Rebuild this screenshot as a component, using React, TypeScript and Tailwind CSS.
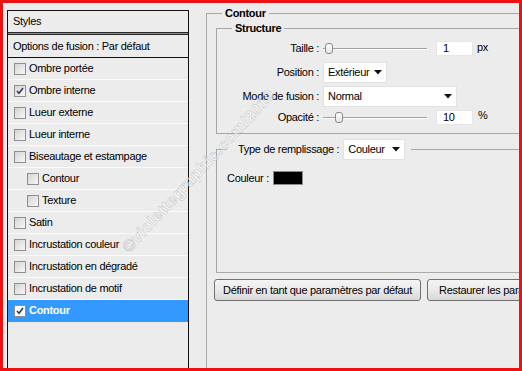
const font = "font-['Liberation_Sans',Arial,sans-serif] text-[11px] tracking-[-0.3px] text-black";

type Effect = { label: string; checked?: boolean; indent?: boolean; selected?: boolean };

const effects: Effect[] = [
  { label: 'Ombre portée' },
  { label: 'Ombre interne', checked: true },
  { label: 'Lueur externe' },
  { label: 'Lueur interne' },
  { label: 'Biseautage et estampage' },
  { label: 'Contour', indent: true },
  { label: 'Texture', indent: true },
  { label: 'Satin' },
  { label: 'Incrustation couleur' },
  { label: 'Incrustation en dégradé' },
  { label: 'Incrustation de motif' },
  { label: 'Contour', checked: true, selected: true },
];

function Checkbox({ checked, light }: { checked?: boolean; light?: boolean }) {
  return (
    <span
      className={
        'flex h-[12px] w-[12px] shrink-0 items-center justify-center border border-[#8e8f8f] ' +
        (light ? 'bg-white' : 'bg-linear-to-br from-[#d4d4d4] to-[#f7f7f7]')
      }
    >
      {checked && (
        <svg width="8" height="8" viewBox="0 0 8 8">
          <path d="M1 4 L3 6.2 L7 1" fill="none" stroke="#2e3a5c" strokeWidth="1.6" />
        </svg>
      )}
    </span>
  );
}

function Arrow() {
  return (
    <svg width="8" height="5" viewBox="0 0 8 5" className="shrink-0">
      <path d="M0 0 H8 L4 4.5 Z" fill="#111" />
    </svg>
  );
}

function Select({ value, width }: { value: string; width: string }) {
  return (
    <div
      className={`flex h-[21px] items-center justify-between border border-[#e2e2e2] bg-white pl-[4px] pr-[4px] ${width}`}
    >
      <span>{value}</span>
      <Arrow />
    </div>
  );
}

function Slider({ at }: { at: string }) {
  return (
    <div className="relative h-[11px] w-[104px] shrink-0">
      <div className="absolute top-[5px] right-0 left-0 h-[2px] border-t border-b border-t-[#a0a0a0] border-b-white" />
      <div
        className={`absolute top-0 h-[11px] w-[8px] rounded-[3px] border border-[#8a8a8a] bg-linear-to-b from-white to-[#e4e4e4] ${at}`}
      />
    </div>
  );
}

function NumberBox({ value }: { value: string }) {
  return (
    <div className="ml-[9px] flex h-[15px] w-[37px] items-center border border-[#e6e6e6] bg-white pl-[6px]">
      {value}
    </div>
  );
}

export default function App() {
  return (
    <div
      className={`relative flex h-[371px] w-[522px] overflow-hidden border-[3px] border-[#ee1111] bg-[#ececec] ${font}`}
    >
      {/* styles list */}
      <div className="mt-[7px] ml-[4px] h-[400px] w-[182px] shrink-0 border border-[#111]">
        <div className="flex h-[21px] items-center pl-[5px]">Styles</div>
        <div className="h-[3px] border-y border-[#2a2a2a] bg-[#8a8a8a]" />
        <div className="flex h-[23px] items-center border-b border-[#111] pl-[5px]">
          Options de fusion : Par défaut
        </div>
        {effects.map((e, i) => (
          <div
            key={i}
            className={
              'flex h-[22px] items-center gap-[3px] border-b ' +
              (e.indent ? 'pl-[19px] ' : 'pl-[6px] ') +
              (e.selected
                ? 'border-[#3399ff] bg-[#3399ff] font-bold text-white'
                : 'border-[#fbfbfb]')
            }
          >
            <Checkbox checked={e.checked} light={e.selected} />
            <span>{e.label}</span>
          </div>
        ))}
      </div>

      {/* settings */}
      <fieldset className="mt-[3px] ml-[17px] h-[400px] w-[340px] shrink-0 border border-[#a8a8a8]">
        <legend className="ml-[15px] px-[3px] leading-[14px] font-bold">Contour</legend>

        <fieldset className="mt-[1px] ml-[9px] w-[320px] border border-[#a8a8a8] pb-[8px]">
          <legend className="ml-[15px] px-[3px] leading-[14px] font-bold">Structure</legend>

          <div className="mt-[5px] flex h-[16px] items-center">
            <span className="w-[102px] text-right">Taille :</span>
            <div className="ml-[4px] flex items-center">
              <Slider at="left-[2px]" />
              <NumberBox value="1" />
              <span className="ml-[4px] -translate-y-[1px]">px</span>
            </div>
          </div>

          <div className="mt-[6px] flex h-[21px] items-center">
            <span className="w-[102px] text-right">Position :</span>
            <div className="ml-[4px]">
              <Select value="Extérieur" width="w-[64px]" />
            </div>
          </div>

          <div className="mt-[3px] flex h-[21px] items-center">
            <span className="w-[102px] text-right">Mode de fusion :</span>
            <div className="ml-[4px]">
              <Select value="Normal" width="w-[134px]" />
            </div>
          </div>

          <div className="mt-[2px] flex h-[16px] items-center">
            <span className="w-[102px] text-right">Opacité :</span>
            <div className="ml-[4px] flex items-center">
              <Slider at="left-[12px]" />
              <NumberBox value="10" />
              <span className="ml-[5px] -translate-y-[2px]">%</span>
            </div>
          </div>
        </fieldset>

        <fieldset className="mt-[5px] ml-[9px] w-[320px] border border-[#a8a8a8]">
          <legend className="ml-[10px] pr-[6px] pl-[11px]">
            <div className="flex items-center">
              <span>Type de remplissage :</span>
              <div className="ml-[4px]">
                <Select value="Couleur" width="w-[62px]" />
              </div>
            </div>
          </legend>
          <div className="h-[112px] pt-[11px] pl-[10px]">
            <div className="flex h-[14px] items-center gap-[4px]">
              <span>Couleur :</span>
              <div className="h-[14px] w-[30px] border border-[#8c8c8c] bg-black" />
            </div>
          </div>
        </fieldset>

        <div className="mt-[6px] ml-[7px] flex gap-[6px]">
          <button className="h-[22px] w-[207px] shrink-0 rounded-[3px] border border-[#707070] bg-linear-to-b from-[#f4f4f4] via-[#eaeaea] to-[#d8d8d8]">
            Définir en tant que paramètres par défaut
          </button>
          <button className="h-[22px] shrink-0 rounded-[3px] border border-[#707070] bg-linear-to-b from-[#f4f4f4] via-[#eaeaea] to-[#d8d8d8] px-[11px] whitespace-nowrap">
            Restaurer les paramètres par défaut
          </button>
        </div>
      </fieldset>

      {/* watermark */}
      <span className="pointer-events-none absolute top-[168px] left-[196px] -translate-x-1/2 -translate-y-1/2 -rotate-[47deg] font-['Liberation_Sans',Arial,sans-serif] text-[16px] font-bold tracking-[0.5px] whitespace-nowrap text-white opacity-60 [-webkit-text-stroke:0.5px_#a8a8a8]">
        ©violettegraphic.com/2010
      </span>
    </div>
  );
}
